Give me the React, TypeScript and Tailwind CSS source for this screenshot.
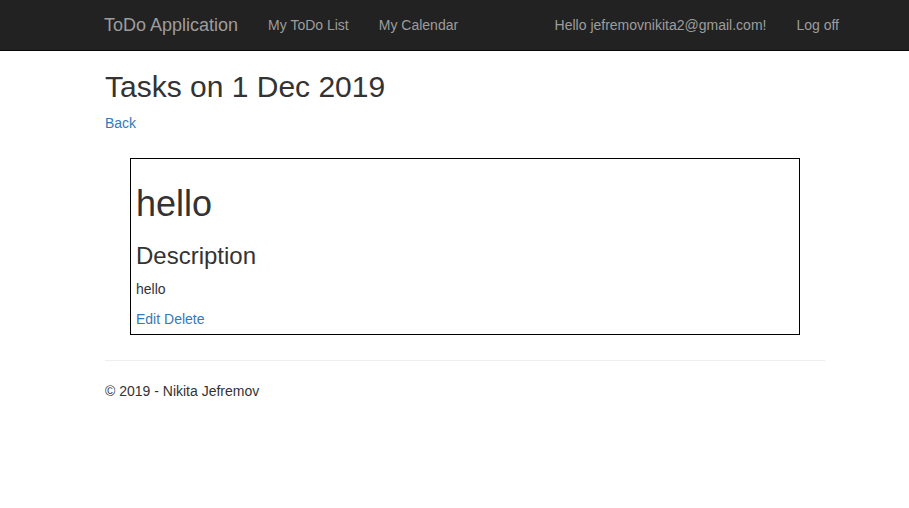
const navLinks = ['My ToDo List', 'My Calendar'];

const App = () => {
  return (
    <div className="min-h-[508px] bg-white text-[14px] leading-[20px] text-[#333] [font-family:'Liberation_Sans',Arial,sans-serif]">
      <nav className="h-[51px] border-b border-[#080808] bg-[#222]">
        <div className="ml-[89px] flex w-[765px] items-start justify-between">
          <div className="flex">
            <a className="block h-[50px] p-[15px] text-[18px] leading-[20px] text-[#9d9d9d]">ToDo Application</a>
            {navLinks.map(link => (
              <a key={link} className="block px-[15px] py-[15px] leading-[20px] text-[#9d9d9d]">
                {link}
              </a>
            ))}
          </div>
          <div className="flex">
            <a className="block px-[15px] py-[15px] leading-[20px] text-[#9d9d9d]">Hello jefremovnikita2@gmail.com!</a>
            <a className="block px-[15px] py-[15px] leading-[20px] text-[#9d9d9d]">Log off</a>
          </div>
        </div>
      </nav>

      <main className="ml-[105px] w-[720px]">
        <h2 className="mt-[19px] mb-[10px] text-[30px] leading-[33px] font-normal">Tasks on 1 Dec 2019</h2>
        <a className="text-[#337ab7]">Back</a>

        <div className="mx-[25px] mt-[25px] border border-black px-[5px] pt-[5px] pb-[5px]">
          <h1 className="mt-[20px] mb-[10px] text-[36px] leading-[39.6px] font-normal">hello</h1>
          <h3 className="mt-[19px] mb-[10px] text-[24px] leading-[26.4px] font-normal">Description</h3>
          <p className="mb-[10px]">hello</p>
          <p>
            <a className="text-[#337ab7]">Edit</a> <a className="text-[#337ab7]">Delete</a>
          </p>
        </div>

        <hr className="mt-[25px] mb-[20px] border-t border-[#eee]" />
        <footer>
          <p>© 2019 - Nikita Jefremov</p>
        </footer>
      </main>
    </div>
  );
};

export default App;
